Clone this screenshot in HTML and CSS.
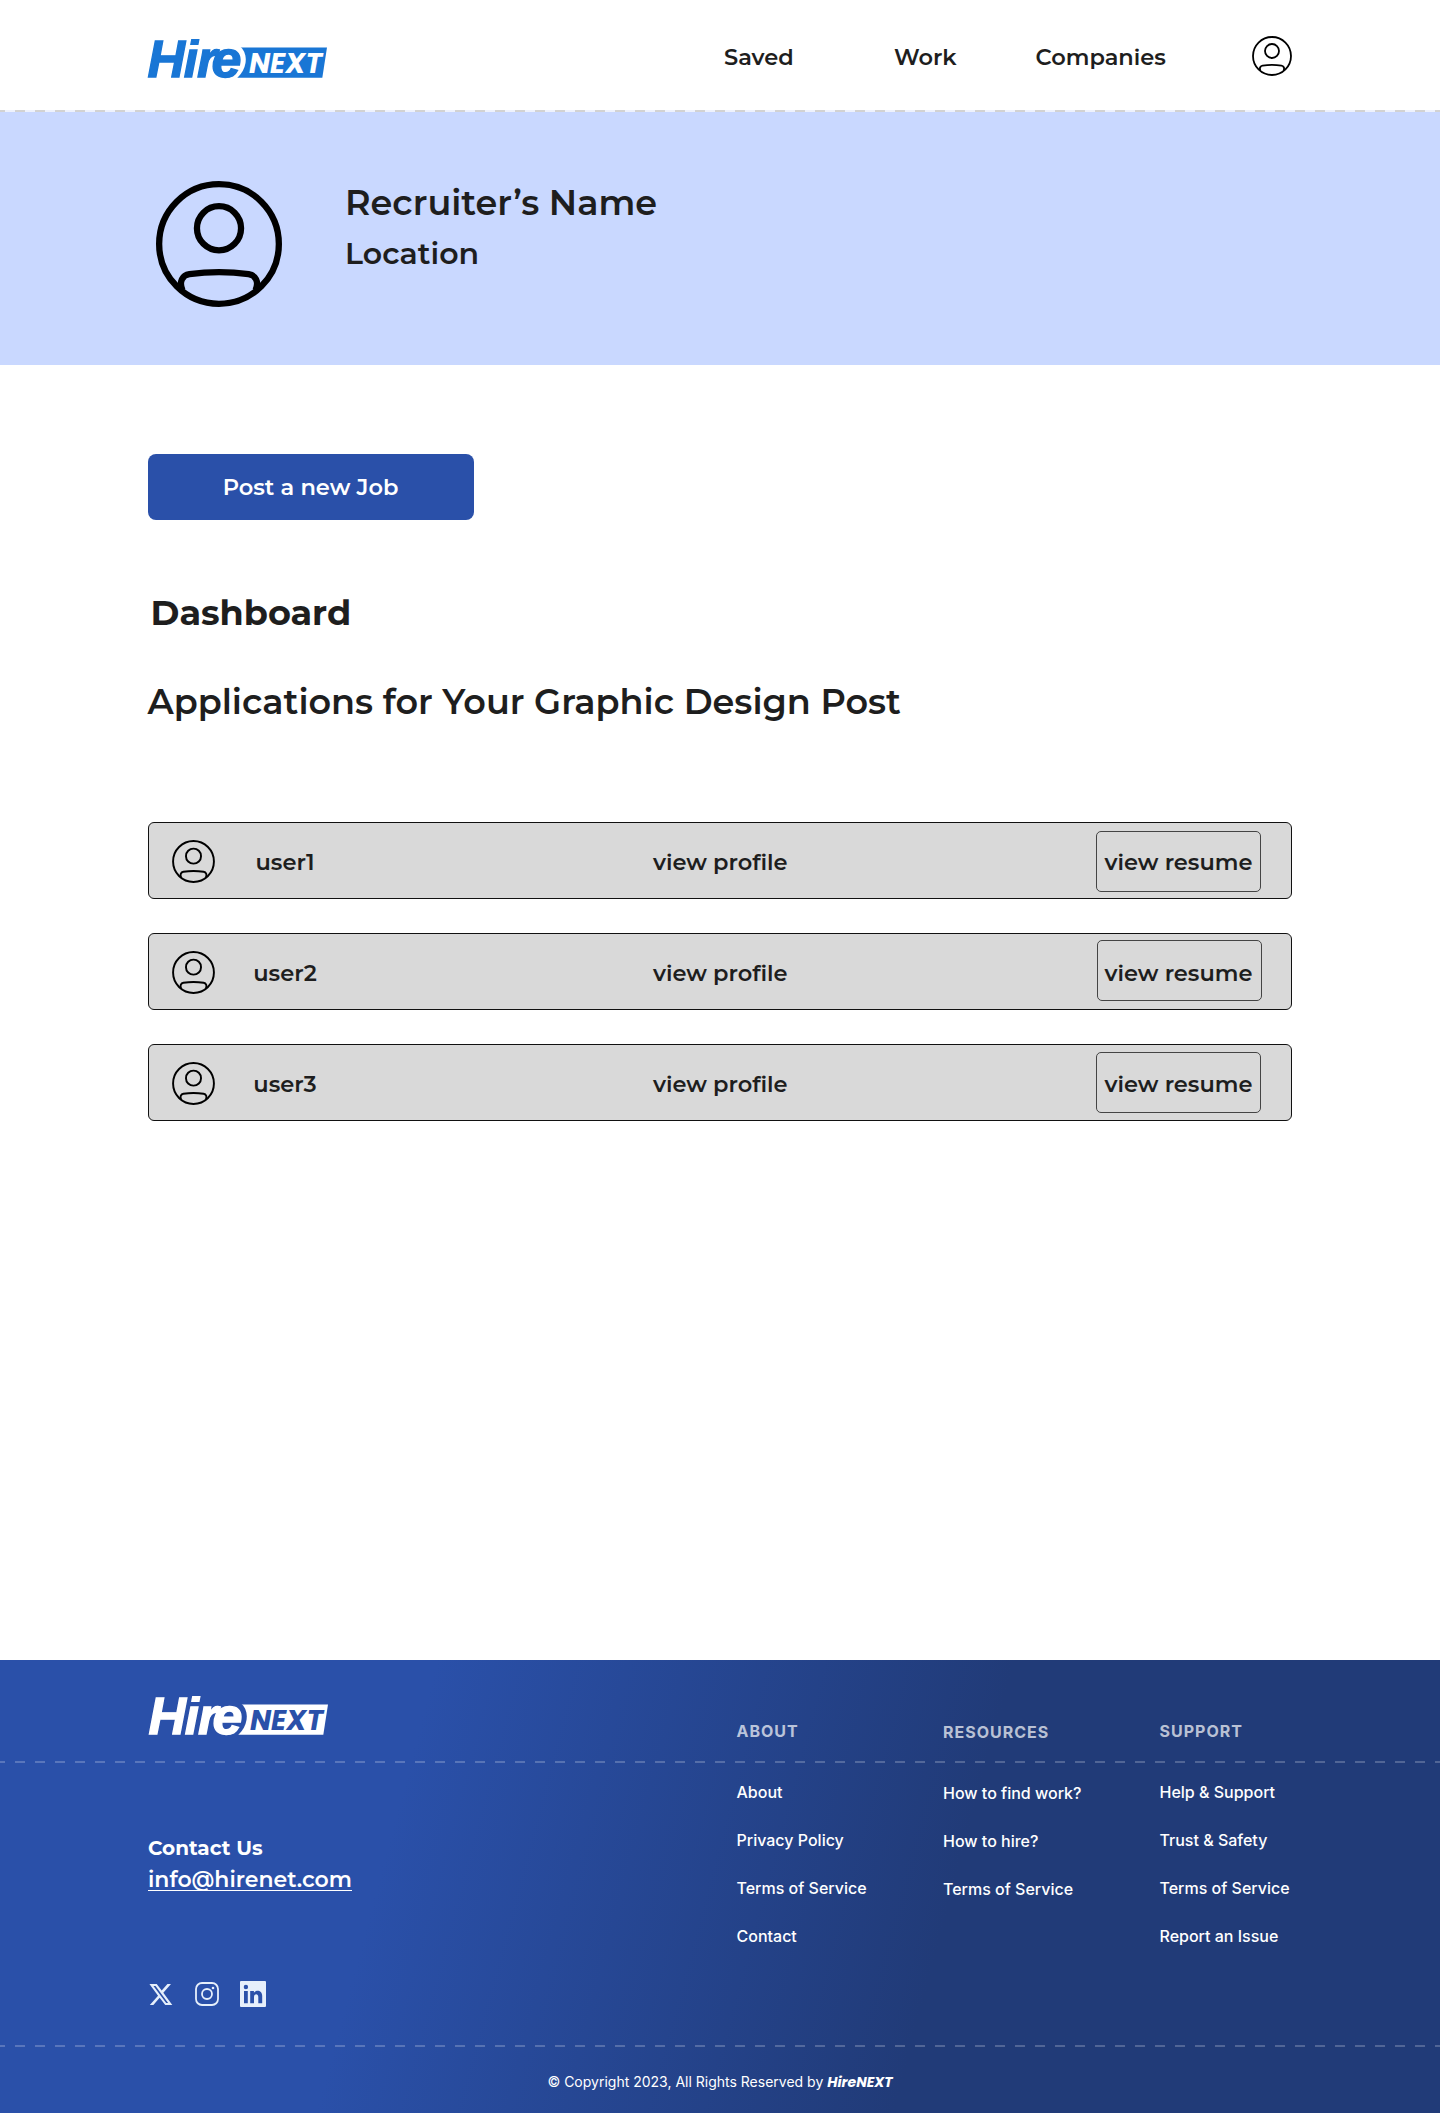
FILE: index.html
```html
<!DOCTYPE html>
<html lang="en">
<head>
<meta charset="utf-8">
<title>HireNEXT – Recruiter Dashboard</title>
<link rel="stylesheet" href="styles.css">
</head>
<body>
<svg class="defs" aria-hidden="true">
  <symbol id="logo" viewBox="0 0 182 40">
    <path d="M88 8.400H180L175.300 38.700H83Z" fill="currentColor"/>
    <ellipse class="logo-halo" cx="80" cy="24" rx="18.500" ry="20" transform="translate(3.800 0) skewX(-9)"/>
    <g class="logo-hire" font-size="51.500">
      <text x="0.600" y="37.600" textLength="37.500" lengthAdjust="spacingAndGlyphs">H</text>
      <text x="36.800" y="37.600">i</text>
      <text x="50" y="37.600">r</text>
      <text x="64.500" y="37.600" textLength="30" lengthAdjust="spacingAndGlyphs">e</text>
    </g>
    <text class="logo-next" y="34" x="102" font-size="28.300" textLength="73" lengthAdjust="spacingAndGlyphs">NEXT</text>
  </symbol>
  <symbol id="avatar" viewBox="0 0 20 20">
    <g fill="none" stroke="currentColor">
      <circle cx="10" cy="10" r="9.500"/>
      <circle cx="10" cy="7.500" r="3.500"/>
      <path d="M4.200 17.300C3.600 16 4.200 14.950 5.300 14.800Q10 14.100 14.700 14.800C15.800 14.950 16.400 16 15.800 17.300"/>
    </g>
  </symbol>
</svg>

<header class="header">
  <svg class="logo logo-blue" role="img" aria-label="HireNEXT"><use href="#logo"/></svg>
  <nav class="nav">
    <a>Saved</a>
    <a>Work</a>
    <a>Companies</a>
    <svg class="avatar-sm"><use href="#avatar"/></svg>
  </nav>
</header>
<div class="dashes dashes-gray"></div>

<section class="hero">
  <svg class="avatar-lg"><use href="#avatar"/></svg>
  <div class="who">
    <h1 class="name">Recruiter’s Name</h1>
    <p class="location">Location</p>
  </div>
</section>

<main class="main">
  <button class="post">Post a new Job</button>
  <h2 class="dashboard">Dashboard</h2>
  <h3 class="applications">Applications for Your Graphic Design Post</h3>
  <div class="rows">
    <div class="row">
      <svg class="avatar-md"><use href="#avatar"/></svg>
      <span class="user">user1</span>
      <a class="profile">view profile</a>
      <a class="resume">view resume</a>
    </div>
    <div class="row row-second">
      <svg class="avatar-md"><use href="#avatar"/></svg>
      <span class="user">user2</span>
      <a class="profile">view profile</a>
      <a class="resume">view resume</a>
    </div>
    <div class="row row-third">
      <svg class="avatar-md"><use href="#avatar"/></svg>
      <span class="user">user3</span>
      <a class="profile">view profile</a>
      <a class="resume">view resume</a>
    </div>
  </div>
</main>

<footer class="footer">
  <div class="footer-body">
    <div class="brand">
      <svg class="logo logo-white" role="img" aria-label="HireNEXT"><use href="#logo"/></svg>
      <p class="contact">Contact Us</p>
      <a class="mail">info@hirenet.com</a>
      <div class="social">
        <svg class="x" viewBox="0 0 24 24"><path fill="currentColor" d="M18.200 1h3.700l-8 9.200L23.300 23h-7.400l-5.800-7.600L3.500 23H-.2l8.600-9.800L-.6 1H7l5.200 6.900zm-1.300 19.800h2L5.800 3.100H3.600z"/></svg>
        <svg class="insta" viewBox="0 0 24 24"><g fill="none" stroke="currentColor" stroke-width="1.800"><rect x="1" y="1" width="22" height="22" rx="6"/><circle cx="12" cy="12" r="5"/></g><circle cx="18" cy="6" r="1.300" fill="currentColor"/></svg>
        <svg class="in" viewBox="0 0 26 26"><path fill="currentColor" fill-rule="evenodd" d="M1 0H25Q26 0 26 1V25Q26 26 25 26H1Q0 26 0 25V1Q0 0 1 0ZM4 10V22.300H7.800V10ZM5.900 3.800A2.200 2.200 0 1 0 5.900 8.200A2.200 2.200 0 1 0 5.900 3.800ZM10.200 10V22.300H14V16C14 12.400 18.300 12.300 18.300 16V22.300H22.200V15C22.200 9.200 16.300 8.400 13.900 11.700V10Z"/></svg>
      </div>
    </div>
    <div class="col">
      <h4>ABOUT</h4>
      <a>About</a><a>Privacy Policy</a><a>Terms of Service</a><a>Contact</a>
    </div>
    <div class="col col-resources">
      <h4>RESOURCES</h4>
      <a>How to find work?</a><a>How to hire?</a><a>Terms of Service</a>
    </div>
    <div class="col">
      <h4>SUPPORT</h4>
      <a>Help &amp; Support</a><a>Trust &amp; Safety</a><a>Terms of Service</a><a>Report an Issue</a>
    </div>
    <div class="dashes dashes-top"></div>
  </div>
  <div class="dashes"></div>
  <p class="copyright">© Copyright 2023, All Rights Reserved by <b>HireNEXT</b></p>
</footer>
</body>
</html>
```
FILE: styles.css
```css
* { box-sizing: border-box; margin: 0; padding: 0; }
body { width: 1440px; background: #fff; color: #1e1e1e; font-family: Montserrat, Inter, sans-serif; font-weight: 600; }
.defs { display: none; }
svg { display: block; overflow: visible; }

.logo { width: 182px; height: 40px; }
.logo-blue { color: #1976d5; --logo-ground: #fff; margin-top: 2px; }
.logo-white { color: #fff; --logo-ground: #2a50a9; }
.logo-halo { fill: var(--logo-ground); }
.logo-hire { font-family: "Liberation Sans", sans-serif; font-weight: 700; font-style: italic; fill: currentColor; stroke: currentColor; stroke-width: 1.3px; }
.logo-next { font-family: Poppins, Inter, sans-serif; font-weight: 700; font-style: italic; fill: var(--logo-ground); }

.header { display: flex; align-items: center; height: 110px; padding: 6px 0 0 147px; }
.nav { display: grid; grid-template-columns: 170px 141.5px 216.500px 40px; align-items: center; margin-left: 395px; font-size: 22.5px; line-height: 28px; margin-top: -4px; }
.nav a { padding-top: 1px; }
.avatar-sm { width: 40px; height: 40px; stroke-width: .9; color: #000; }
.dashes { height: 2px; background: repeating-linear-gradient(90deg, rgba(255,255,255,.22) 0 10px, transparent 10px 20px) -5px 0; }
.dashes-gray { background-image: repeating-linear-gradient(90deg, #d2d2d2 0 10px, #eef2fc 10px 20px); }

.hero { display: flex; height: 253px; padding: 69px 0 0 156px; background: #c9d8ff; }
.avatar-lg { width: 126px; height: 126px; color: #000; }
.who { margin-left: 63px; }
.name { font-size: 35px; line-height: 44px; font-weight: 600; }
.location { font-size: 30px; line-height: 36px; margin-top: 11px; }

.main { height: 1295px; padding: 89px 148px 0 147.500px; }
.post { display: block; width: 326px; height: 65.500px; padding-top: 1px; border: 0; border-radius: 8px; background: #2a50a9; color: #fff; font: 600 22.5px/28px Montserrat, Inter, sans-serif; }
.dashboard { margin: 71px 0 0 3px; font-size: 35px; line-height: 44px; font-weight: 700; }
.applications { margin-top: 45px; font-size: 35px; line-height: 44px; font-weight: 600; }
.rows { display: grid; gap: 34px; margin-top: 98px; }
.row { display: grid; grid-template-columns: 43px 140px 1fr 165px; height: 77px; padding: 2px 30.500px 0 23.500px; border: 1px solid #111; border-radius: 6px; background: #d9d9d9; font-size: 22.5px; line-height: 28px; align-items: center; }
.avatar-md { width: 43px; height: 43px; color: #000; stroke-width: .9; }
.user, .profile { padding-top: 2px; text-align: center; }
.profile { padding-right: 10px; }
.resume { display: grid; place-items: center; align-self: start; width: 165px; height: 61px; margin-top: 6px; padding: 2px 0 0 1px; border: 1px solid #444; border-radius: 5px; }
.row-second .resume { margin: 4px -1px 0 1px; padding: 6px 1px 0 0; }
.row-third .resume { margin-top: 5px; padding-top: 4px; }

.footer { height: 453px; color: #fff; background: linear-gradient(105deg, #2a50a9 28%, #213b78 65%); font-family: Inter, sans-serif; }
.footer-body { position: relative; display: grid; grid-template-columns: 588.500px 206.500px 216.500px 1fr; height: 385px; padding-left: 148px; }
.dashes-top { position: absolute; left: 0; right: 0; top: 101px; }
.brand { padding-top: 36px; font-family: Montserrat, Inter, sans-serif; }
.contact { margin-top: 98.500px; font-size: 20px; line-height: 26px; font-weight: 700; }
.mail { display: block; width: fit-content; margin-top: 8.500px; font-size: 22px; line-height: 21px; font-weight: 600; border-bottom: 1px solid #fff; }
.social { display: flex; align-items: center; margin: 90px 0 0 2px; color: #e6effb; }
.x { width: 23px; height: 23px; }
.insta { width: 24px; height: 24px; margin: 0 21px 0 22px; }
.in { width: 26px; height: 26px; }
.col { display: flex; flex-direction: column; padding-top: 59px; font-size: 16px; line-height: 24px; font-weight: 500; }
.col h4 { margin-bottom: 37px; font-weight: 700; letter-spacing: 1px; color: rgba(255,255,255,.7); }
.col a { margin-bottom: 24px; }
.col-resources { padding-top: 60px; }
.copyright { padding-top: 23px; text-align: center; font-size: 14px; line-height: 24px; font-weight: 400; }
.copyright b { font-family: Poppins, Inter, sans-serif; font-weight: 700; font-style: italic; }
```
